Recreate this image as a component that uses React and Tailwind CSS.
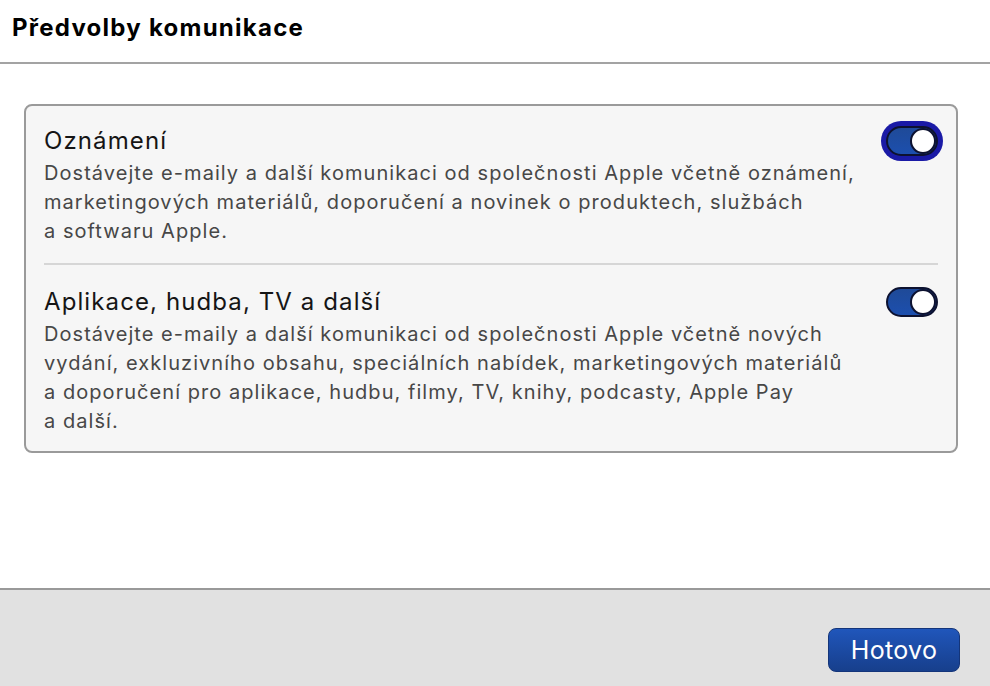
import React from "react";

function Toggle({ focused }) {
  const inner = (
    <div className="w-[52px] h-[30px] rounded-full border-2 border-[#0d1230] bg-gradient-to-b from-[#1f4a98] to-[#1c4fae] flex items-center justify-end">
      <div className="w-[26px] h-[26px] rounded-full bg-white border-2 border-[#0d1230]" />
    </div>
  );
  if (focused) {
    return (
      <div className="rounded-full p-[5px] bg-[#1a1aa6] -m-[5px]">{inner}</div>
    );
  }
  return inner;
}

function Row({ title, children, focused }) {
  return (
    <div className="flex items-start justify-between">
      <div>
        <div className="text-[24px] leading-[30px] tracking-[1.1px] text-[#151515]">{title}</div>
        <div className="text-[20px] leading-[29px] tracking-[1.05px] text-[#474747] mt-[3px]">{children}</div>
      </div>
      <div className="mt-[0px]">
        <Toggle focused={focused} />
      </div>
    </div>
  );
}

export default function App() {
  return (
    <div className="w-[990px] h-[686px] bg-white flex flex-col" style={{ fontFamily: "Inter, 'Noto Sans', sans-serif" }}>
      <div className="h-[64px] border-b-2 border-[#a3a3a3] px-[12px] pt-[12px]">
        <div className="text-[24px] font-bold text-black leading-[32px] tracking-[1.25px]">Předvolby komunikace</div>
      </div>
      <div className="flex-1 pt-[40px] px-[24px]">
        <div className="w-[934px] h-[349px] rounded-[8px] border-2 border-[#9a9a9a] bg-[#f6f6f6] px-[18px] pt-[20px]">
          <Row title="Oznámení" focused>
            Dostávejte e-maily a další komunikaci od společnosti Apple včetně oznámení,
            <br />
            marketingových materiálů, doporučení a novinek o produktech, službách
            <br />a softwaru Apple.
          </Row>
          <div className="h-[2px] bg-[#d6d6d6] mt-[17px] mb-[22px]" />
          <Row title="Aplikace, hudba, TV a další">
            Dostávejte e-maily a další komunikaci od společnosti Apple včetně nových
            <br />
            vydání, exkluzivního obsahu, speciálních nabídek, marketingových materiálů
            <br />a doporučení pro aplikace, hudbu, filmy, TV, knihy, podcasty, Apple Pay
            <br />a další.
          </Row>
        </div>
      </div>
      <div className="h-[98px] border-t-2 border-[#999] bg-[#e1e1e1] flex items-start justify-end pr-[30px] pt-[38px]">
        <button className="w-[132px] h-[44px] rounded-[8px] bg-gradient-to-b from-[#2056bb] to-[#173f8c] text-white text-[25px] tracking-[0.3px] leading-none border border-[#14357a]">
          Hotovo
        </button>
      </div>
    </div>
  );
}
